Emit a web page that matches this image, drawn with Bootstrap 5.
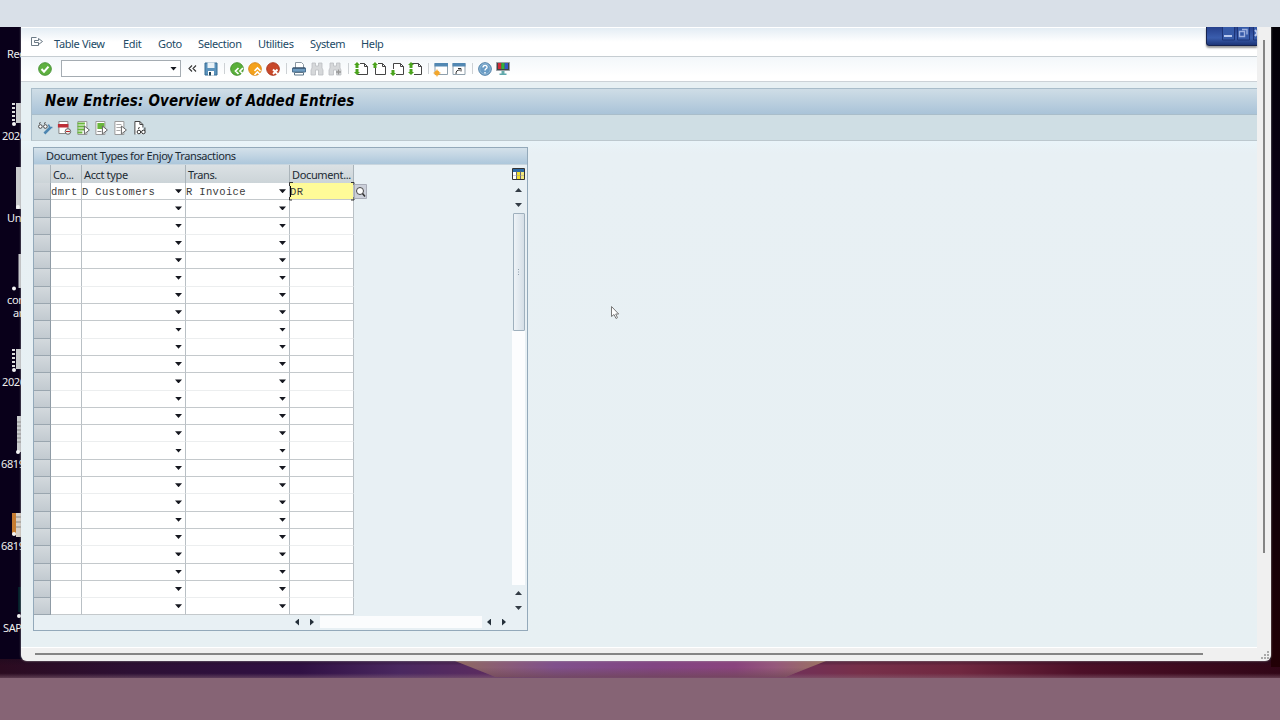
<!DOCTYPE html>
<html lang="en">
<head>
<meta charset="utf-8">
<meta name="viewport" content="width=device-width, initial-scale=1">
<title>New Entries: Overview of Added Entries</title>
<link href="https://cdn.jsdelivr.net/npm/bootstrap@5.3.0/dist/css/bootstrap.min.css" rel="stylesheet">
<style>
body{width:1280px;height:720px;overflow:hidden;font-family:"Noto Sans","Open Sans",sans-serif;font-size:11px;letter-spacing:-.36px;line-height:1;color:#1c2a33;background:#866475}
.top-strip{height:27px;background:#d9e0e8}
.desk{height:651px;background:linear-gradient(90deg,#09001a 0,#09001a 21px,#100010 60%,#080008 100%)}
.desk-right{right:0;top:0;width:9px;height:640px;background:linear-gradient(#020006 0,#0b0017 30%,#080008 60%,#220006 100%)}
.glow{left:0;right:0;top:632px;height:19px;background:linear-gradient(rgba(30,10,30,.6) 0,rgba(0,0,0,0) 35%,rgba(0,0,0,0) 75%,rgba(134,100,117,.55) 100%),linear-gradient(90deg,#2b0b20 0,#2d1034 130px,#301044 300px,#4a2860 400px,#5c2c60 490px,#70305a 780px,#77304a 860px,#702840 960px,#4d1028 1080px,#310617 1280px)}
.glow span{left:455px;width:371px;top:2px;height:16px;clip-path:polygon(0 0,100% 0,89% 100%,11% 100%);background:linear-gradient(rgba(110,70,85,0) 40%,rgba(110,70,85,.7)),linear-gradient(90deg,#8f6a60 0,#8a5c78 50px,#80508c 100px,#824583 200px,#8a447e 280px,#96587c 320px,#9b7460 371px)}
.win{left:21px;top:0;width:1250px;height:634px;background:#f0f0f0;border-radius:0 0 6px 6px;overflow:hidden;box-shadow:0 0 2px #aaa}
.sess{width:1236px;height:621px;background:#e7f0f3;border-bottom:1px solid #fff}
.menu-row{height:30px;padding:3px 0 0 9px;background:linear-gradient(#e4edf4 0,#fff 14px);border-top:1px solid #fff;border-bottom:1px solid #c6cdd2}
.menu-row a{color:#224a66;text-decoration:none;display:block;white-space:nowrap}
.bar-row{height:25px;padding:0 0 1px 15px;background:linear-gradient(#f3f7fa,#fff 80%);border-bottom:1px solid #ccd2d7}
.bar-row svg{width:18px;height:16px;flex:none}
.cmd{width:120px;height:17px;border:1px solid #a5acb2;background:#fff;margin:0 6px 0 7px}
.gapline{width:1px;height:11px;background:#cdd1d4;margin:0 3px 0 4px}
.title-row{height:27px;margin:6px 0 0 10px;padding-left:13px;border:1px solid #a9bdca;border-right:0;background:linear-gradient(#cfdde6,#a9c3d8);font-family:"DejaVu Sans Condensed","DejaVu Sans",sans-serif;font-stretch:condensed;font-style:italic;font-weight:700;font-size:15px;letter-spacing:.15px;color:#000}
.app-row{height:26px;margin-left:10px;padding:0 0 0 4px;border-left:1px solid #a9bdca;border-bottom:1px solid #bcc8ce;background:#cfdee4}
.app-row svg{width:18.8px;height:16px;flex:none}
.body-row{padding:6px 0 0 12px;background:linear-gradient(#e9f4f9 0,#e8f0f4 12px,#e7f0f3)}
.tpanel{width:495px;height:484px;border:1px solid #93a9ba;background:#e8f0f4}
.cap{height:17px;padding:0 0 1px 12px;background:linear-gradient(#d4e1ea,#adc7db);border-bottom:1px solid #c9d6df}
.tgrid{display:grid;grid-template-columns:17px 31px 104px 104px 64px}
.tgrid>div{height:17.3px;border-right:1px solid #b9c0c5;border-bottom:1px solid #c4c9cc;background:#fff;white-space:nowrap}
.tgrid>.hd{height:18px;background:linear-gradient(#dbe1e4,#ccd4d8);padding-left:2px;border-right-color:#aab4ba;border-bottom:0}
.tgrid>.sel{background:linear-gradient(#d3d9dd,#c2cad0);border-right:1px solid #8f9ba5;border-bottom-color:#9aa6af}
.tgrid>.soft{border-bottom-color:#eceeef}
.mono{font-family:"Liberation Mono","Courier New",monospace;font-size:10.5px;letter-spacing:.35px;color:#3c3c3c}
.mono span{padding-top:2px}
.tri{width:7px;height:4px;background:#15171f;clip-path:polygon(0 0,100% 0,50% 100%);margin-right:3px}
.tri-u,.tri-d{width:7px;height:4px;background:#333c45}
.tri-u{clip-path:polygon(50% 0,100% 100%,0 100%)}
.tri-d{clip-path:polygon(0 0,100% 0,50% 100%)}
.tri-l,.tri-r{width:4px;height:7px;background:#25303a}
.tri-l{clip-path:polygon(100% 0,100% 100%,0 50%)}
.tri-r{clip-path:polygon(0 0,100% 50%,0 100%)}
.vbar{width:13px;margin-right:2px}
.thumb{height:118px;width:12px;border:1px solid #9fb0bd;border-radius:1px;background:linear-gradient(90deg,#eef3f7,#d5dfe7)}
.focus-mark{left:-1px;top:-1px;width:66px;height:19px}
.f4{left:320px;top:36px}
.sapctl{right:0;top:0;width:51px;height:19px;background:linear-gradient(#26408c,#3a5dad 60%,#1e3678);border:1px solid #16234f;border-top:0;border-right:0;border-radius:0 0 0 3px;box-shadow:0 2px 2px #999;overflow:hidden}
.lbl{color:#eee;font-size:11px;white-space:nowrap;margin-top:-1px}
.hscr{left:14px;top:626px;width:1168px;height:2px;background:#858585}
.vscr{left:1242px;top:13px;width:2px;height:513px;background:#858585}
</style>
</head>
<body class="m-0">
<svg width="0" height="0" class="position-absolute">
 <defs>
  <symbol id="page" viewBox="0 0 18 16"><path d="M5.500 2.500h7l3 3v8h-10z" fill="#fff" stroke="#444"/><path d="M12.500 2.500v3h3" fill="none" stroke="#444"/></symbol>
  <symbol id="bino" viewBox="0 0 18 16"><path d="M4 2h3.500v3h3V2H14v5l1 2v5h-4.500V9h-3v5H3V9l1-2z" fill="#d6d8da" stroke="#bbbec1" stroke-width=".8"/></symbol>
  <symbol id="up" viewBox="0 0 6 6"><path d="M3 0l3 3H4.500v3h-3V3H0z" fill="#4aa31c"/></symbol>
 </defs>
</svg>
<div class="top-strip"></div>
<main class="desk position-relative overflow-hidden">
 <svg class="position-absolute" style="left:0;top:0" width="22" height="632">
  <g fill="#c9cbcd">
   <path d="M16 76h6v20h-6zM16 140h6v42h-6zM18.500 227h4v34h-4zM16 322h6v20h-6zM17 389h5v36h-5z"/>
   <path d="M12 486h4v22h-4z" fill="#c67c32"/><path d="M16 486h6v24h-6z" fill="#d8cfc5"/><path d="M18 560h3v25h-3z" fill="#04202a"/>
   <path d="M13.500 76v20M13.500 322v20" stroke="#ddd" stroke-width="3" stroke-dasharray="2 2"/>
   <path d="M17 395h4m-4 4h4m-4 4h4m-4 4h4m-4 4h4m-4 4h4m-5 75h5m-5 5h5m-5 5h5" stroke="#888"/>
   <g fill="#f4f4f4"><circle cx="14" cy="97" r="2"/><circle cx="18" cy="180" r="2"/><circle cx="14" cy="261.500" r="2"/><circle cx="14" cy="343" r="2"/><circle cx="18" cy="425" r="2"/><circle cx="14" cy="507" r="2"/><circle cx="19" cy="589" r="2"/></g>
  </g>
 </svg>
 <span class="lbl position-absolute" style="left:7px;top:22px">Rec</span>
 <span class="lbl position-absolute" style="left:2px;top:104px">2026</span>
 <span class="lbl position-absolute" style="left:7px;top:186px">Unt</span>
 <span class="lbl position-absolute" style="left:7px;top:268px">com</span>
 <span class="lbl position-absolute" style="left:13px;top:281px">an</span>
 <span class="lbl position-absolute" style="left:2px;top:350px">2026</span>
 <span class="lbl position-absolute" style="left:1px;top:432px">6819</span>
 <span class="lbl position-absolute" style="left:1px;top:514px">6819</span>
 <span class="lbl position-absolute" style="left:3px;top:596px">SAP</span>
 <div class="glow position-absolute"><span class="position-absolute"></span></div>
 <div class="desk-right position-absolute"></div>

 <section class="win position-absolute">
  <div class="sess d-flex flex-column position-relative">
   <nav class="menu-row d-flex align-items-center">
    <svg width="15" height="13" class="me-2" style="margin-top:-5px" fill="none" stroke="#5c6c78"><path d="M6.500 2.500h-5v8h7v-2M4.500 5.500h4v-2l4 3-4 3v-2h-4z" stroke-width=".9"/></svg>
    <a href="#" style="width:69px;margin-left:1px">Table View</a><a href="#" style="width:35px">Edit</a><a href="#" style="width:40px">Goto</a><a href="#" style="width:60px">Selection</a><a href="#" style="width:52px">Utilities</a><a href="#" style="width:51px">System</a><a href="#">Help</a>
   </nav>
   <div class="bar-row d-flex align-items-center">
    <svg viewBox="0 0 18 16"><circle cx="9" cy="8" r="6.300" fill="#5fb040" stroke="#4a9438"/><path d="M5.500 8l2.500 2.700 4.500-5" fill="none" stroke="#fff" stroke-width="2"/></svg>
    <div class="cmd d-flex align-items-center justify-content-end"><i class="tri"></i></div>
    <svg viewBox="0 0 9 16" style="width:9px;margin:0 5px 0 1px" fill="none" stroke="#333"><path d="M4 4.500L1 7.500l3 3M8 4.500l-3 3 3 3" stroke-width="1.100"/></svg>
    <svg viewBox="0 0 18 16"><path d="M3 2h12v12H3z" fill="#5b93bd" stroke="#376c93"/><path d="M5.500 1.500h7V7h-7z" fill="#e9f2f7"/><path d="M6 10h6v4.500H6z" fill="#fff"/><path d="M7 11h2v3.500H7z" fill="#245"/></svg>
    <i class="gapline"></i>
    <svg viewBox="0 0 18 16"><circle cx="9" cy="8" r="6.300" fill="#5ab03a" stroke="#45912f"/><path d="M10.500 7L7.500 10l3 3M15 7l-3 3 3 3" fill="none" stroke="#fff" stroke-width="1.700"/></svg>
    <svg viewBox="0 0 18 16"><circle cx="9" cy="8" r="6.300" fill="#f4a21c" stroke="#d9881c"/><path d="M8.500 10l3-3 3 3M8.500 14l3-3 3 3" fill="none" stroke="#fff" stroke-width="1.600"/></svg>
    <svg viewBox="0 0 18 16"><circle cx="9" cy="8" r="6.300" fill="#c8482a" stroke="#ab3a22"/><path d="M9 8.500l4.500 4.500M13.500 8.500L9 13" stroke="#fff" stroke-width="1.900"/></svg>
    <i class="gapline"></i>
    <svg viewBox="0 0 18 16"><path d="M5.500 7V1.500h6l2 2V7" fill="#fff" stroke="#8c98a2"/><path d="M2.500 7h13v4h-13z" fill="#6e9bc0" stroke="#4c7090"/><path d="M3 7h12" stroke="#2c4358"/><path d="M4.500 11.500h9v2.500h-9z" fill="#fff" stroke="#5b7487"/></svg>
    <svg><use href="#bino"/></svg>
    <svg viewBox="0 0 18 16"><use href="#bino" width="18" height="16"/><path d="M12.500 8.500v5M10 11h5" stroke="#999" stroke-width="1.300"/></svg>
    <i class="gapline"></i>
    <svg viewBox="0 0 18 16"><use href="#page" width="18" height="16"/><path d="M3 1h5v10.500H3z" fill="#fff"/><use href="#up" x="2" y="1" width="6" height="6"/><path d="M5 14l3-3H6.500V8h-3v3H2z" fill="#4aa31c"/></svg>
    <svg viewBox="0 0 18 16"><use href="#page" width="18" height="16"/><path d="M3 1h5v6H3z" fill="#fff"/><use href="#up" x="2" y="1" width="6" height="6"/></svg>
    <svg viewBox="0 0 18 16"><use href="#page" width="18" height="16"/><path d="M3 8h5v7H3z" fill="#fff"/><path d="M5 15l3-3H6.500V9h-3v3H2z" fill="#4aa31c"/></svg>
    <svg viewBox="0 0 18 16"><use href="#page" width="18" height="16"/><path d="M3 3h5v12H3z" fill="#fff"/><use href="#up" x="2" y="1" width="6" height="6"/><path d="M5 14l3-3H6.500V8h-3v3H2z" fill="#4aa31c"/></svg>
    <i class="gapline"></i>
    <svg viewBox="0 0 18 16"><path d="M3 2.500h12.500v11H3z" fill="#fff" stroke="#8fa0ac"/><path d="M2.500 2h13.500v3.500H2.500z" fill="#5288b3"/><circle cx="5" cy="12" r="2.500" fill="#f2a62c"/><path d="M5 8.500v7M1.500 12h7" stroke="#f2a62c"/></svg>
    <svg viewBox="0 0 18 16"><path d="M3 2.500h12v11H3z" fill="#fff" stroke="#8fa0ac"/><path d="M2.500 2h13v3.500h-13z" fill="#5288b3"/><path d="M6 13c0-3 1-4 4-4M8 7.500h3v3" fill="none" stroke="#333"/></svg>
    <i class="gapline"></i>
    <svg viewBox="0 0 18 16"><circle cx="9" cy="8" r="6.300" fill="#6a9cc5" stroke="#4b7ba3"/><circle cx="9" cy="8" r="5.300" fill="none" stroke="#9fc3dd" stroke-width=".7"/><path d="M7 6.500c0-3 4.500-2.600 4 0C10.700 7.800 9 8 9 9.500M9 11v1.500" fill="none" stroke="#fff" stroke-width="1.400"/></svg>
    <svg viewBox="0 0 18 16"><path d="M2.500 1.500h13v8h-13z" fill="#444" stroke="#9a9fa4"/><path d="M4 2h3.300v6H4z" fill="#d02a38"/><path d="M7.300 2h3.400v6H7.300z" fill="#35b03c"/><path d="M10.700 2H14v6h-3.300z" fill="#3358c4"/><path d="M7.500 10h3v3h-3z" fill="#6aa"/><path d="M5.500 12.500h7v1.500h-7z" fill="#5ea8ac"/></svg>
   </div>
   <div class="title-row d-flex align-items-center"><span>New Entries: Overview of Added Entries</span></div>
   <div class="app-row d-flex align-items-center">
    <svg viewBox="0 0 18 16"><circle cx="4" cy="6.500" r="1.800" fill="#fff" stroke="#444"/><circle cx="9" cy="6.500" r="1.800" fill="#fff" stroke="#444"/><path d="M3 4l1-2M8 4l1-2" stroke="#555"/><path d="M8 13.500l6-6" stroke="#4c85b0" stroke-width="2.600"/><path d="M12 4.500l1.500 3L16 7.500" fill="none" stroke="#4c85b0" stroke-width="1.600"/></svg>
    <svg viewBox="0 0 18 16"><path d="M3.500 1.500h9v12h-9z" fill="#fff" stroke="#888"/><path d="M2.500 4h10.500v3.500H2.500z" fill="#bd2f38"/><circle cx="12.500" cy="11.500" r="2.800" fill="#eee" stroke="#666"/><path d="M10.500 11.500h4" stroke="#b22"/></svg>
    <svg viewBox="0 0 18 16"><path d="M3.500 1.500h9v13h-9z" fill="#fff" stroke="#999"/><path d="M3 3.500h7.500M3 6.500h7.500M3 9.500h7.500M3 12.500h5" stroke="#69b63c" stroke-width="2"/><path d="M10 6l5 4-5 4z" fill="#fff" stroke="#666"/></svg>
    <svg viewBox="0 0 18 16"><path d="M3.500 1.500h9v13h-9z" fill="#fff" stroke="#999"/><path d="M5 3h7v6H5z" fill="#69b63c"/><path d="M5 11.500h4" stroke="#888"/><path d="M10 6l5 4-5 4z" fill="#fff" stroke="#666"/></svg>
    <svg viewBox="0 0 18 16"><path d="M3.500 1.500h9v13h-9z" fill="#fff" stroke="#999"/><path d="M5 4.500h5M5 7.500h5M5 10.500h4" stroke="#aaa"/><path d="M10 6l5 4-5 4z" fill="#fff" stroke="#666"/></svg>
    <svg viewBox="0 0 18 16"><path d="M4.500 1.500h5l3 3V14h-8z" fill="#fff"/><path d="M4.500 14.500v-13h5l3 3v3M9.500 1.500v3h3" fill="none" stroke="#444"/><circle cx="8.500" cy="12" r="1.800" fill="#fff" stroke="#333"/><circle cx="13" cy="12" r="1.800" fill="#fff" stroke="#333"/><path d="M8 9l1-2M14.500 11V7.500" stroke="#333"/></svg>
   </div>
   <div class="body-row flex-grow-1">
    <div class="tpanel position-relative d-flex flex-column">
     <div class="cap d-flex align-items-center"><span>Document Types for Enjoy Transactions</span></div>
     <div class="d-flex justify-content-between flex-grow-1">
      <div class="d-flex flex-column">
       <div class="tgrid" id="grid">
        <div class="hd"></div><div class="hd d-flex align-items-center">Co...</div><div class="hd d-flex align-items-center">Acct type</div><div class="hd d-flex align-items-center">Trans.</div><div class="hd d-flex align-items-center">Document...</div>
       </div>
      </div>
      <div class="vbar d-flex flex-column align-items-center">
       <svg width="13" height="13" style="margin-top:3px"><path d="M.5.5h12v11H.5z" fill="#fff" stroke="#333"/><path d="M1 1h11v3H1z" fill="#2d6aa5"/><path d="M5 4h3v7H5z" fill="#f3e02e"/><path d="M9 4h3v7H9z" fill="#f3e97c"/><path d="M4.500 3v8M8.500 3v8" stroke="#667"/><path d="M1 7.500h11" stroke="#99a" stroke-width=".5"/></svg>
       <i class="tri-u" style="margin-top:7px"></i><i class="tri-d" style="margin-top:11px"></i>
       <div class="thumb d-flex align-items-center justify-content-center" style="margin-top:6px"><svg width="4" height="7"><path d="M1.500 0v7" stroke="#94a3af" stroke-dasharray="1 1.500"/></svg></div>
       <div class="w-100 bg-white" style="height:254px;opacity:.85"></div>
       <i class="tri-u" style="margin-top:6px"></i><i class="tri-d" style="margin-top:11px"></i>
      </div>
     </div>
     <div class="d-flex align-items-center position-absolute" style="left:261px;top:468px">
      <i class="tri-l"></i><i class="tri-r" style="margin-left:11px"></i><div class="bg-white" style="width:162px;height:12px;margin-left:6px;opacity:.8"></div><i class="tri-l" style="margin-left:5px"></i><i class="tri-r" style="margin-left:11px"></i>
     </div>
     <svg class="f4 position-absolute" width="13" height="15"><path d="M.5.500h12v14H.5z" fill="#ccd0da" stroke="#a9adb8"/><circle cx="6" cy="7" r="3.500" fill="#fff" stroke="#444"/><path d="M8.500 9.500l2.500 3" stroke="#333" stroke-width="1.500"/></svg>
    </div>
   </div>
   <div class="sapctl position-absolute"><svg width="52" height="18" fill="none"><path d="M15.500-1h12v14h-12zM30.500-1h12v14h-12zM46.500-1h12v14h-12z" fill="#365aa8" stroke="#1d3477"/><path d="M17 9h8" stroke="#b9c9ee" stroke-width="2"/><path d="M32.500 4.500h5v5h-5zM35 2.500h5v5" stroke="#9fb2e0" stroke-width="1.400"/><path d="M48 3l5 6M48 9l5-6" stroke="#b9c9ee" stroke-width="2"/></svg></div>
  </div>
  <div class="hscr position-absolute"></div>
  <div class="vscr position-absolute"></div>
  <svg class="position-absolute" style="right:2px;bottom:2px" width="8" height="8" fill="#aaa"><path d="M6 0h2v2H6zM3 3h2v2H3zM6 3h2v2H6zM0 6h2v2H0zM3 6h2v2H3zM6 6h2v2H6z"/></svg>
 </section>
 <svg class="position-absolute" style="left:610px;top:278px" width="10" height="15"><path d="M1.500 1.500v10l2.500-2 2 4 1.500-.8-1.800-3.700h3z" fill="#fff" stroke="#777"/></svg>
</main>
<script src="https://cdn.jsdelivr.net/npm/bootstrap@5.3.0/dist/js/bootstrap.bundle.min.js"></script>
<script>
 // 25 entry rows; only the first is filled in
 const grid = document.getElementById('grid');
 let rows = '';
 for (let i = 0; i < 25; i++) {
  const s = i % 3 === 2 ? ' soft' : '';
  const t = i ? ['', '', ''] : ['dmrt', 'D Customers', 'R Invoice'];
  rows += `<div class="sel"></div><div class="mono d-flex align-items-center${s}"><span>${t[0]}</span></div>`
   + `<div class="mono d-flex align-items-center justify-content-between${s}"><span>${t[1]}</span><i class="tri"></i></div>`
   + `<div class="mono d-flex align-items-center justify-content-between${s}"><span>${t[2]}</span><i class="tri"></i></div>`
   + (i ? `<div class="${s}"></div>`
        : `<div class="mono d-flex align-items-center position-relative" style="background:#fffb98"><span class="ps-0">DR</span><svg class="focus-mark position-absolute" fill="none" stroke="#333"><path d="M.5 4V.5H4M62 .5h3V3M.5 15v3H3M62 18h3v-3"/><path d="M1.500 4v11" stroke="#000"/></svg></div>`);
 }
 grid.insertAdjacentHTML('beforeend', rows);
</script>
</body>
</html>
